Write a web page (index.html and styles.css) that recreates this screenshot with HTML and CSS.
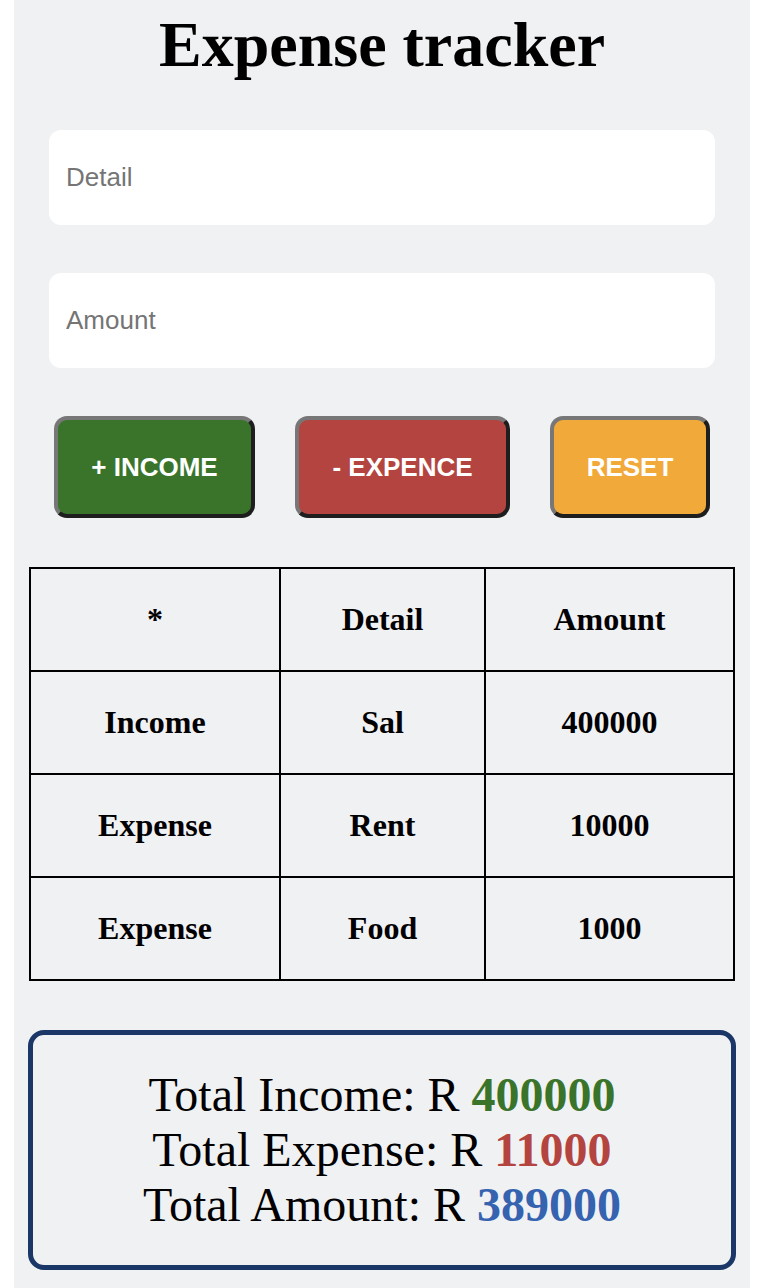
FILE: index.html
```html
<!DOCTYPE html>
<html lang="en">
<head>
<meta charset="utf-8">
<title>Expense tracker</title>
<link rel="stylesheet" href="styles.css">
</head>
<body>
<main class="panel">
  <h1 class="title">Expense tracker</h1>
  <input class="field" type="text" placeholder="Detail">
  <input class="field" type="text" placeholder="Amount">
  <div class="actions">
    <button class="btn btn-income">+ INCOME</button>
    <button class="btn btn-expense">- EXPENCE</button>
    <button class="btn btn-reset">RESET</button>
  </div>
  <table class="ledger">
    <colgroup>
      <col class="c1"><col class="c2"><col class="c3">
    </colgroup>
    <tr><th>*</th><th>Detail</th><th>Amount</th></tr>
    <tr><td>Income</td><td>Sal</td><td>400000</td></tr>
    <tr><td>Expense</td><td>Rent</td><td>10000</td></tr>
    <tr><td>Expense</td><td>Food</td><td>1000</td></tr>
  </table>
  <section class="summary">
    <div>Total Income: R <b class="v-income">400000</b></div>
    <div>Total Expense: R <b class="v-expense">11000</b></div>
    <div>Total Amount: R <b class="v-total">389000</b></div>
  </section>
</main>
</body>
</html>
```
FILE: styles.css
```css
html, body {
  margin: 0;
  padding: 0;
  background: #ffffff;
}
body {
  font-family: "Liberation Serif", "Times New Roman", serif;
}
.panel {
  box-sizing: border-box;
  width: 736px;
  min-height: 1288px;
  margin-left: 14px;
  background: #f0f1f3;
  padding-top: 8px;
  display: flex;
  flex-direction: column;
  align-items: center;
}
.title {
  margin: 0;
  font-size: 64px;
  font-weight: bold;
  line-height: normal;
  color: #000;
}
.field {
  box-sizing: border-box;
  width: 666px;
  height: 95px;
  margin-top: 48px;
  border: none;
  border-radius: 12px;
  background: #fff;
  padding: 0 17px;
  font-family: "Liberation Sans", Arial, sans-serif;
  font-size: 26px;
  color: #000;
  outline: none;
}
.field::placeholder {
  color: #757575;
}
.actions {
  display: flex;
  gap: 40px;
  margin-top: 48px;
}
.btn {
  box-sizing: border-box;
  height: 102px;
  padding: 0 32px;
  border-width: 4px;
  border-style: solid;
  border-color: #777777 #1e1e1e #1e1e1e #777777;
  border-radius: 13px;
  font-family: "Liberation Sans", Arial, sans-serif;
  font-weight: bold;
  font-size: 26px;
  color: #fff;
}
.btn-income { background: #3a742b; width: 201px; }
.btn-expense { background: #b3443f; width: 215px; }
.btn-reset { background: #f1a93a; width: 160px; }
.ledger {
  margin-top: 49px;
  border-collapse: collapse;
  table-layout: fixed;
  width: 704px;
}
.c1 { width: 250px; }
.c2 { width: 205px; }
.c3 { width: 249px; }
.ledger th, .ledger td {
  border: 2px solid #000;
  padding: 32px 0;
  text-align: center;
  font-size: 32px;
  font-weight: bold;
  line-height: normal;
}
.summary {
  box-sizing: border-box;
  width: 708px;
  margin-top: 49px;
  border: 5px solid #1a3768;
  border-radius: 16px;
  padding: 32px 0 33px;
  text-align: center;
  font-size: 48px;
  line-height: normal;
}
.summary b { font-weight: bold; }
.v-income { color: #3a742b; }
.v-expense { color: #b3443f; }
.v-total { color: #3563b0; }
```
